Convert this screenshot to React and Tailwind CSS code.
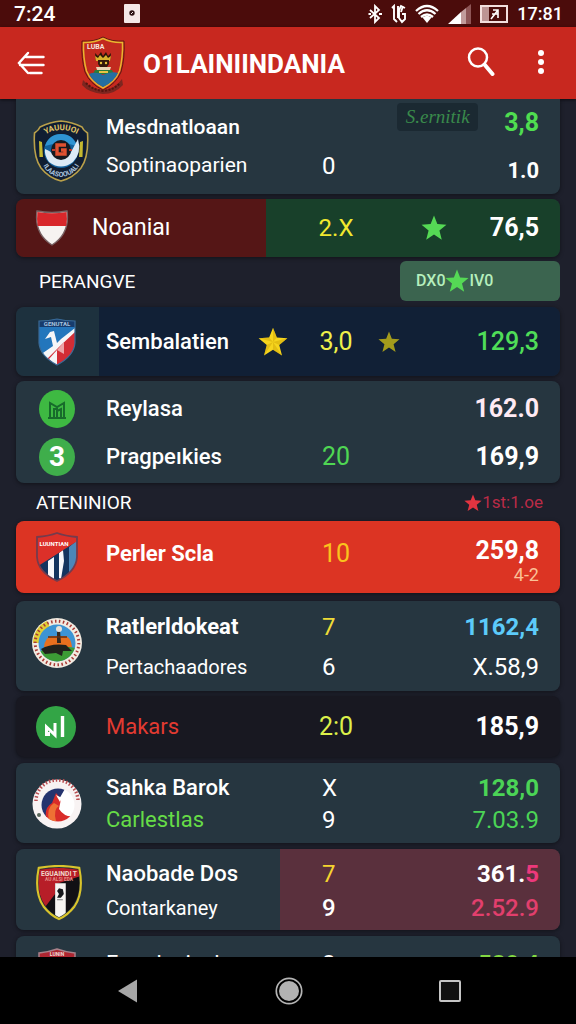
import React from "react";

function Star({ className, shaded }) {
  return (
    <svg viewBox="0 0 24 24" className={className} aria-hidden="true">
      <path
        d="M12 0.5 L15.1 8.4 L23.5 9 L17 14.4 L19.2 22.8 L12 18.1 L4.8 22.8 L7 14.4 L0.5 9 L8.9 8.4 Z"
        fill="currentColor"
      />
      {shaded && (
        <path
          d="M12 0.5 L12 12 L15.1 8.4 Z M23.5 9 L12 12 L17 14.4 Z M19.2 22.8 L12 12 L12 18.1 Z M4.8 22.8 L12 12 L7 14.4 Z M0.5 9 L12 12 L8.9 8.4 Z"
          fill="#c99a06"
          opacity="0.4"
        />
      )}
    </svg>
  );
}

function ClubCrest() {
  return (
    <svg viewBox="0 0 44 58" className="h-[58px] w-11 shrink-0" aria-hidden="true">
      <path d="M2 44 Q10 53 22 54 Q34 53 41 43 L42 49 Q34 58 22 58 Q8 57 1 49 Z" fill="#7d2620" />
      <path d="M5 47 Q12 54 22 55 Q33 54 39 47" fill="none" stroke="#55150f" strokeWidth="2" strokeDasharray="2 1.5" />
      <path d="M22 1 Q13 6 1 5 Q0 22 4 36 Q9 48 22 54 Q35 48 40 36 Q44 22 43 5 Q31 6 22 1 Z" fill="#c22a1f" stroke="#5e1a10" strokeWidth="1" />
      <path d="M22 2.5 Q13 7 2.5 6.5 Q2 22 5.5 35 Q10 46 22 52 Q34 46 38.5 35 Q42 22 41.5 6.5 Q31 7 22 2.5 Z" fill="none" stroke="#e9b62e" strokeWidth="1.5" />
      <text x="6" y="13" fontFamily="Roboto, sans-serif" fontWeight="700" fontSize="7" fill="#f7e4dc">LUBA</text>
      <path d="M14 17 l3 3 l3 -4 l2 4 l3 -4 l2 4 l3 -3 l-1 8 h-14 Z" fill="#2a1509" />
      <path d="M14 20 l3 2 l2 -3 l3 3 l3 -3 l2 3 l3 -2 l-1 5 h-14 Z" fill="#d9b12c" />
      <path d="M17 24 h11 v4 l-2 3 h-7 l-2 -3 Z" fill="#33190b" />
      <circle cx="20" cy="27" r="1.2" fill="#e8c43b" />
      <circle cx="25" cy="27" r="1.2" fill="#e8c43b" />
      <path d="M15 31 h15 l-1 3 h-13 Z" fill="#e9d6b4" />
      <path d="M14 34 h17 l2 4 h-21 Z" fill="#2d7b3b" />
      <path d="M8 38 Q15 35 22 39 Q30 35 37 37 Q33 46 22 51 Q12 46 8 38 Z" fill="#246fa0" />
      <path d="M18 35 h9 v2 h-9 Z" fill="#e7c445" />
    </svg>
  );
}

function PoliceCrest() {
  return (
    <svg viewBox="0 0 56 64" className="h-16 w-14" aria-hidden="true">
      <path d="M28 2 Q17 3 7 8 Q6 11 1.5 14 Q0 38 8 49 Q16 59 28 62 Q40 59 48 49 Q56 38 54.5 14 Q50 11 49 8 Q39 3 28 2 Z" fill="#101e32" stroke="#b9a04a" strokeWidth="1.6" />
      <path d="M9 23 L6 22 L6.500 38 L10 38 Z M47 23 L50 22 L49.5 38 L46 38 Z" fill="#c5b92f" />
      <path id="police-top" d="M8 18 Q28 4 49 18" fill="none" />
      <text fontFamily="Roboto, sans-serif" fontWeight="700" fontSize="8" fill="#e3c766">
        <textPath href="#police-top" startOffset="5">YAUUUOI</textPath>
      </text>
      <circle cx="28" cy="32" r="17" fill="#12629d" />
      <path d="M12 27 Q16 15 28 15 Q40 15 44 27 L36 25 H20 Z" fill="#2f94d2" />
      <path d="M12 30 Q18 32 20 36 Q28 44 37 35 L45 20 Q49 34 40 43 Q28 52 16 43 Q11 36 12 30 Z" fill="#dceaf5" />
      <circle cx="28" cy="31" r="10" fill="#17191f" />
      <path d="M33 26 H24 V35 H32 V31 H28" fill="none" stroke="#df5131" strokeWidth="3.4" />
      <path d="M22 31 h-3 M36 31 h3" stroke="#bc3c2c" strokeWidth="2" />
      <path id="police-bottom" d="M8 41 Q13 57 28 58 Q43 57 49 41" fill="none" />
      <text fontFamily="Roboto, sans-serif" fontWeight="700" fontSize="7" fill="#a9c2dc">
        <textPath href="#police-bottom" startOffset="6">ILAASOOUALI</textPath>
      </text>
    </svg>
  );
}

function FlagShield() {
  return (
    <svg viewBox="0 0 34 38" className="h-[38px] w-[34px]" aria-hidden="true">
      <path d="M2 2 Q17 5 32 2 Q35 25 17 36 Q-1 25 2 2 Z" fill="#f6f3f1" stroke="#796365" strokeWidth="1.4" />
      <path d="M2.500 3 Q17 5.500 31.500 3 Q32.500 10 31.200 17 H2.800 Q1.500 10 2.500 3 Z" fill="#d8272b" />
    </svg>
  );
}

function BlueRedShield() {
  return (
    <svg viewBox="0 0 40 50" className="h-[50px] w-10" aria-hidden="true">
      <defs>
        <clipPath id="blue-red"><path d="M2 4 Q12 4 20 2 Q28 4 38 4 V26 Q37 39 20 48 Q3 39 2 26 Z" /></clipPath>
      </defs>
      <g clipPath="url(#blue-red)">
        <path d="M0 0 H40 V50 H0 Z" fill="#2376bc" />
        <path d="M0 0 H40 V10 H0 Z" fill="#173c6d" />
        <path d="M38 12 L8 43 L20 50 L40 40 Z" fill="#d22d35" />
        <path d="M38 11 L24 22 L20 26 L17 14 L13 15 L8 22 L14 20 L16 29 L3 38 L8 44 L22 30 L38 15 Z" fill="#f5f5f7" />
        <path d="M12 42 L20 33 V50 Z" fill="#f5f5f7" />
        <path d="M20 33 L27 25 V37 Z" fill="#eca5a8" />
      </g>
      <path d="M2 4 Q12 4 20 2 Q28 4 38 4 V26 Q37 39 20 48 Q3 39 2 26 Z" fill="none" stroke="#3a6a96" strokeWidth="1.2" />
      <text x="20" y="9" textAnchor="middle" fontFamily="Roboto, sans-serif" fontWeight="700" fontSize="6" fill="#a9c3df">GENUTAL</text>
    </svg>
  );
}

function BookBadge() {
  return (
    <svg viewBox="0 0 36 38" className="h-[38px] w-9" aria-hidden="true">
      <ellipse cx="18" cy="19" rx="18" ry="19" fill="#3eb942" />
      <path d="M11 27 V13 L18 17 L25 13 V27 M9 28 H27 M15 27 V19 H18 V27 M18 21 L22 19 V27" fill="none" stroke="#176b2b" strokeWidth="2" />
    </svg>
  );
}

function StripedShield() {
  return (
    <svg viewBox="0 0 44 52" className="h-[52px] w-11" aria-hidden="true">
      <defs>
        <clipPath id="striped"><path d="M2 6 Q14 5 22 2 Q30 5 42 6 V26 Q41 41 22 50 Q3 41 2 26 Z" /></clipPath>
      </defs>
      <g clipPath="url(#striped)">
        <path d="M0 0 H44 V52 H0 Z" fill="#14345f" />
        <path d="M34 16 L44 8 V36 L34 44 Z" fill="#4c87b8" />
        <path d="M13 30 L19 26 V52 H13 Z M24 22 L28 19 L29 30 L26 48 L24 47 Z" fill="#f8f8fb" />
        <path d="M0 0 H44 V9 L0 37 Z" fill="#dc3029" />
      </g>
      <path d="M2 6 Q14 5 22 2 Q30 5 42 6 V26 Q41 41 22 50 Q3 41 2 26 Z" fill="none" stroke="#743b4d" strokeWidth="1.8" />
      <text x="19" y="15" textAnchor="middle" fontFamily="Roboto, sans-serif" fontWeight="700" fontSize="6" fill="#fff">LUUNTIAN</text>
    </svg>
  );
}

function LandscapeSeal() {
  return (
    <svg viewBox="0 0 52 52" className="h-[52px] w-[52px]" aria-hidden="true">
      <defs><clipPath id="land"><circle cx="26" cy="26" r="18.500" /></clipPath></defs>
      <circle cx="26" cy="26" r="25" fill="#f2ebe1" />
      <path d="M2 26 A24 24 0 0 1 16 4 L19 10 A18 18 0 0 0 8 26 Z" fill="#e1cf36" />
      <circle cx="26" cy="26" r="21.800" fill="none" stroke="#a93a35" strokeWidth="3" strokeDasharray="1.500 2.500" />
      <g clipPath="url(#land)">
        <path d="M0 0 H52 V52 H0 Z" fill="#3d94d4" />
        <path d="M13 30 Q14 20 21 19 H35 Q40 21 41 30 Z" fill="#e8701e" />
        <path d="M7 35 Q24 27 45 31 V52 H7 Z" fill="#3c9b35" />
        <path d="M10 32 Q20 26 35 28 L41 34 L32 34 L31 39 L25 36 L14 37 Z" fill="#20221d" />
        <path d="M26 26 L26 15 L29 13 L30 26 Z" fill="#34291f" />
        <circle cx="28" cy="12" r="3" fill="#e8e0d6" />
        <path d="M17 20 H36" stroke="#602f16" strokeWidth="1.500" />
      </g>
    </svg>
  );
}

function GreenMark() {
  return (
    <svg viewBox="0 0 40 42" className="h-[42px] w-10" aria-hidden="true">
      <ellipse cx="20" cy="21" rx="20" ry="21" fill="#33a546" />
      <path d="M10.500 30 V21 L19 29 V17" fill="none" stroke="#fff" strokeWidth="3" />
      <path d="M9 28 H14" stroke="#fff" strokeWidth="4" />
      <path d="M26.500 10 V31" stroke="#fff" strokeWidth="3.400" />
    </svg>
  );
}

function BirdSeal() {
  return (
    <svg viewBox="0 0 50 50" className="h-[50px] w-[50px]" aria-hidden="true">
      <defs><clipPath id="bird"><circle cx="26" cy="26" r="16.500" /></clipPath></defs>
      <circle cx="25" cy="25" r="24.500" fill="#f8f3f3" />
      <path d="M4 22 A21 21 0 0 1 46 22" fill="none" stroke="#b94f52" strokeWidth="3.500" strokeDasharray="1.500 2" />
      <g clipPath="url(#bird)">
        <path d="M0 0 H52 V52 H0 Z" fill="#fff" />
        <path d="M8 8 H34 L26 22 L17 38 H8 Z" fill="#25346e" />
        <path d="M16 45 Q10 30 20 24 L24 14 L29 20 L27 30 Q33 39 43 37 L36 46 Z" fill="#d92c29" />
        <path d="M17 42 Q14 29 22 24 L27 27 Q21 30 24 42 Z" fill="#ee7034" />
        <path d="M24 16 L30 19 L28 23 Z" fill="#fff" />
      </g>
      <circle cx="7" cy="36" r="2" fill="#57665a" />
    </svg>
  );
}

function TricolorShield() {
  return (
    <svg viewBox="0 0 48 58" className="h-14 w-12" aria-hidden="true">
      <defs>
        <clipPath id="tricolor"><path d="M4 5 Q24 1 44 5 Q48 28 39 41 Q33 50 24 54 Q15 50 9 41 Q0 28 4 5 Z" /></clipPath>
      </defs>
      <g clipPath="url(#tricolor)">
        <path d="M0 0 H48 V58 H0 Z" fill="#111014" />
        <path d="M0 0 H48 V11 L20 20 V30 L10 43 L0 34 Z" fill="#b71e28" />
        <path d="M20 19 H31 V58 H20 Z" fill="#f6f4f2" />
        <path d="M22 27 l2 -3 l4 1 l1 5 l-3 4 h-4 l2 -4 Z" fill="#15161a" />
        <path d="M22 36 h6" stroke="#77777a" />
      </g>
      <path d="M3 3 Q24 -1 45 3 Q50 28 40 43 Q33 52 24 56 Q15 52 8 43 Q-2 28 3 3 Z" fill="none" stroke="#d9c42b" strokeWidth="2.200" />
      <text x="24" y="11" textAnchor="middle" fontFamily="Roboto, sans-serif" fontWeight="700" fontSize="7" fill="#f0d9cc">EGUAINDI T</text>
      <text x="24" y="17" textAnchor="middle" fontFamily="Roboto, sans-serif" fontWeight="700" fontSize="5" fill="#e58c86">AU ALSI EDA</text>
    </svg>
  );
}

function RedShield() {
  return (
    <svg viewBox="0 0 40 48" className="h-12 w-10" aria-hidden="true">
      <path d="M2 5 Q12 4 20 1 Q28 4 38 5 V26 Q36 39 20 47 Q4 39 2 26 Z" fill="#ad2631" stroke="#a8818a" strokeWidth="1.500" />
      <text x="20" y="8" textAnchor="middle" fontFamily="Roboto, sans-serif" fontWeight="700" fontSize="5" fill="#f1dcdc">LUNIN</text>
    </svg>
  );
}

function Team({ icon, names, iconClass = "w-[82px]", className = "leading-10" }) {
  return (
    <div className="flex min-w-0 items-center gap-2">
      <div className={"flex shrink-0 flex-col items-center gap-[10px] " + iconClass}>{icon}</div>
      <div className={"min-w-0 whitespace-nowrap text-[22px] " + className}>{names}</div>
    </div>
  );
}

function Card({ className, children }) {
  return (
    <li className={"grid shrink-0 grid-cols-[minmax(0,302fr)_36px_minmax(0,185fr)] items-center overflow-hidden rounded-lg pr-[21px] shadow-[0_1px_4px_rgba(0,0,0,0.45)] " + className}>
      {children}
    </li>
  );
}

const digit = "pl-1 text-left";
const slate = "bg-[#263640]";

export default function App() {
  return (
    <div className="flex h-screen flex-col overflow-hidden bg-[#1e202c] font-['Roboto','Liberation_Sans',sans-serif] text-white">
      <div className="flex h-[27px] shrink-0 items-center justify-between bg-[#4b0c0b] pr-[13px] pl-[14px] leading-6 font-medium">
        <div className="flex items-center gap-[69px]">
          <span className="text-[21px]">7:24</span>
          <svg viewBox="0 0 16 19" className="h-[19px] w-4" aria-hidden="true">
            <rect width="16" height="19" rx="1" fill="#f4e8e7" />
            <circle cx="8" cy="9" r="2.700" fill="#2b1213" />
            <path d="M7 10 L9 8" stroke="#f4e8e7" />
          </svg>
        </div>
        <div className="flex items-center gap-[9px]">
          <svg viewBox="0 0 14 20" className="h-5 w-[14px]" fill="none" stroke="#fff" strokeWidth="1.800" aria-hidden="true">
            <path d="M2 6 L11 14 L7 18 V2 L11 6 L2 14 M0.500 10 H3 M11 10 H14" />
          </svg>
          <svg viewBox="0 0 15 20" className="h-5 w-[15px]" fill="none" stroke="#fff" strokeWidth="1.900" aria-hidden="true">
            <path d="M1 4 L3 2 V15 L6 18 M7 2 V14 M14 4 L10 2 L8 6 V14 L11 18 L14 15 V10 H11 M12 2 L10 8" />
          </svg>
          <svg viewBox="0 0 24 20" className="h-5 w-6" aria-hidden="true">
            <path d="M12 19 L7.500 13.500 Q12 10 16.500 13.500 Z" fill="#fff" />
            <path d="M1 7 Q12 -3 23 7 M3.500 10 Q12 2.500 20.500 10 M6 13 Q12 8 18 13" fill="none" stroke="#fff" strokeWidth="2.300" />
          </svg>
          <svg viewBox="0 0 23 20" className="h-5 w-[23px]" aria-hidden="true">
            <path d="M0 20 L13 8 V20 Z" fill="#fff" />
            <path d="M13 8 L18 4 V20 H13 Z" fill="#c29c9c" />
            <path d="M18 4 L23 0 V20 H18 Z" fill="#8e5556" />
          </svg>
          <svg viewBox="0 0 28 18" className="h-[18px] w-7" fill="none" aria-hidden="true">
            <rect x="1" y="1" width="26" height="16" stroke="#f3dfde" strokeWidth="2" />
            <path d="M2 2 H9 V16 H2 Z" fill="#bd9494" />
            <path d="M11 14 L18 5 M13 5 H18 V13 M12 9 H18" stroke="#fff" strokeWidth="1.600" />
          </svg>
          <span className="text-[18px]">17:81</span>
        </div>
      </div>

      <header className="flex h-[72px] shrink-0 items-center bg-[#c8281f] pr-[27px] pl-[17px] shadow-[0_1px_3px_rgba(0,0,0,0.6)]">
        <button type="button" aria-label="Back" className="shrink-0">
          <svg viewBox="0 0 28 24" className="h-6 w-7" fill="none" stroke="#fff" strokeWidth="2.400" strokeLinecap="round" aria-hidden="true">
            <path d="M11 2 L2 12 L11 22 M9 6 H26.500 M3 14 H26.500 M13 22 H24.500" />
          </svg>
        </button>
        <div className="ml-9 mt-1"><ClubCrest /></div>
        <h1 className="ml-[18px] flex-1 pt-[2px] text-[26px] font-bold whitespace-nowrap">O1LAINIINDANIA</h1>
        <button type="button" aria-label="Search" className="mr-[38px] shrink-0 pb-1">
          <svg viewBox="0 0 28 30" className="h-[30px] w-7" fill="none" stroke="#fff" aria-hidden="true">
            <circle cx="11" cy="11.500" r="9" strokeWidth="2.500" />
            <path d="M17.500 18.500 L25.500 28" strokeWidth="4" strokeLinecap="round" />
          </svg>
        </button>
        <button type="button" aria-label="More options" className="flex w-4 shrink-0 flex-col items-center gap-[3px] pb-[2px]">
          <span className="size-[6px] rounded-full bg-white" />
          <span className="size-[6px] rounded-full bg-white" />
          <span className="size-[6px] rounded-full bg-white" />
        </button>
      </header>

      <main className="min-h-0 flex-1 overflow-y-auto px-4 [scrollbar-width:none]">
        <ul>
          <Card className={"h-[95px] rounded-t-none pb-2 " + slate}>
            <Team icon={<PoliceCrest />} iconClass="w-[82px] pt-1 pl-2" className="pb-[6px] leading-[38px]" names={<><p className="text-[21px] font-medium">Mesdnatloaan</p><p className="text-[21px]">Soptinaoparien</p></>} />
            <div className={"pt-[34px] text-[24px] leading-[38px] " + digit}>0</div>
            <div className="pb-1 text-right text-[25px] leading-[48px] font-bold">
              <div className="flex items-start justify-end gap-[26px]">
                <span className="mt-1 w-[81px] rounded-sm bg-[#1b2932] text-center font-['Liberation_Serif',serif] text-[19px] leading-7 font-normal text-[#398a4b] italic">S.ernitik</span>
                <span className="text-[#4fdd50]">3,8</span>
              </div>
              <div className="text-[22px]">1.0</div>
            </div>
          </Card>

          <Card className="mt-[5px] h-[58px] bg-[linear-gradient(90deg,#551616_46%,#18402a_46%)]">
            <Team icon={<FlagShield />} iconClass="w-[68px] pl-1" names={<p className="text-[23px]">Noaniaı</p>} />
            <div className="text-center text-[24px] text-[#f1e82f]">2.X</div>
            <div className="flex items-center justify-between pl-[67px] text-[25px] font-bold">
              <Star className="size-[26px] text-[#55d955]" />
              <span>76,5</span>
            </div>
          </Card>
        </ul>

        <div className="flex h-[50px] items-center justify-between pl-[23px]">
          <h2 className="text-[19px]">PERANGVE</h2>
          <button type="button" className="mb-[2px] flex h-10 w-40 items-center rounded-md bg-[#3b644f] pl-4 text-[16px] font-medium text-[#b5efbd]">
            <span>DX0</span>
            <Star className="size-6 text-[#55d955]" />
            <span>IV0</span>
          </button>
        </div>

        <ul>
          <Card className="h-[69px] bg-[linear-gradient(90deg,#1d313e_83px,#112036_83px)]">
            <div className="flex items-center justify-between pr-[30px]">
              <Team icon={<BlueRedShield />} names={<p className="font-medium">Sembalatien</p>} />
              <Star shaded className="size-[30px] shrink-0 text-[#f6d51d]" />
            </div>
            <div className="text-center text-[25px] whitespace-nowrap text-[#eef04a]">3,0</div>
            <div className="flex items-center justify-between pl-6 text-[25px] font-medium">
              <Star className="size-[22px] text-[#a39b1c]" />
              <span className="text-[#4fdd58]">129,3</span>
            </div>
          </Card>

          <Card className={"mt-[5px] h-[102px] pt-[2px] " + slate}>
            <Team
              icon={<><BookBadge /><span className="flex h-[38px] w-9 items-center justify-center rounded-[50%] bg-[#3fae4b] text-[28px] font-bold">3</span></>}
              className="leading-[48px]"
              names={<><p className="font-medium">Reylasa</p><p className="font-medium">Pragpeıkies</p></>}
            />
            <div className="pt-12 text-center text-[25px] leading-[48px] text-[#4fd653]">20</div>
            <div className="text-right text-[25px] leading-[48px] font-bold">
              <p className="text-[#ffeaf4]">162.0</p>
              <p>169,9</p>
            </div>
          </Card>
        </ul>

        <div className="flex h-[38px] items-center justify-between pt-[2px] pr-[17px] pl-5">
          <h2 className="text-[19px]">ATENINIOR</h2>
          <p className="flex items-center text-[17px] text-[#ba2b47]">
            <Star className="size-[18px] text-[#e23440]" />
            <span>1st:1.oe</span>
          </p>
        </div>

        <ul>
          <Card className="h-[72px] bg-[#dc3423]">
            <Team icon={<StripedShield />} className="pb-[6px] leading-10" names={<p className="font-bold">Perler Scla</p>} />
            <div className="pb-[6px] text-center text-[25px] text-[#fac31d]">10</div>
            <div className="pt-2 text-right">
              <p className="text-[25px] leading-7 font-bold">259,8</p>
              <p className="text-[18px] leading-5 text-[#fbc197]">4&#8209;2</p>
            </div>
          </Card>

          <Card className={"mt-2 h-[90px] pt-[2px] " + slate}>
            <Team icon={<LandscapeSeal />} iconClass="w-[82px] pb-2" names={<><p className="font-bold">Ratlerldokeat</p><p className="text-[20px]">Pertachaadores</p></>} />
            <div className={"text-[24px] leading-10 " + digit}><p className="text-[#eedb37]">7</p><p>6</p></div>
            <div className="text-right text-[24px] leading-10"><p className="font-bold text-[#5ccbfa]">1162,4</p><p>X.58,9</p></div>
          </Card>

          <Card className="mt-[5px] h-[61px] bg-[#181821]">
            <Team icon={<GreenMark />} iconClass="w-[82px] pr-[2px]" names={<p className="text-[#e23b31]">Makars</p>} />
            <div className="text-center text-[25px] whitespace-nowrap text-[#dcf04a]">2:0</div>
            <div className="text-right text-[25px] font-bold">185,9</div>
          </Card>

          <Card className={"mt-[6px] h-20 pt-[2px] " + slate}>
            <Team icon={<BirdSeal />} className="leading-8" names={<><p className="font-medium">Sahka Barok</p><p className="text-[#66dc47]">Carlestlas</p></>} />
            <div className={"text-[24px] leading-8 " + digit}><p>X</p><p>9</p></div>
            <div className="text-right text-[24px] leading-8 text-[#4bd456]"><p className="font-bold">128,0</p><p>7.03.9</p></div>
          </Card>

          <Card className="mt-[6px] h-[81px] pt-[2px] bg-[linear-gradient(90deg,#263640_264px,#5a303d_264px)]">
            <Team icon={<TricolorShield />} iconClass="w-[82px] pt-1 pl-1" className="leading-[34px]" names={<><p className="font-medium">Naobade Dos</p><p className="text-[20px]">Contarkaney</p></>} />
            <div className={"text-[24px] leading-[34px] " + digit}><p className="text-[#f6d42f]">7</p><p className="font-medium">9</p></div>
            <div className="text-right text-[24px] leading-[34px]">
              <p className="font-bold">361.<span className="text-[#ec397c]">5</span></p>
              <p className="font-medium text-[#e23f6d]">2.52.9</p>
            </div>
          </Card>

          <Card className={"mt-[6px] h-[72px] " + slate}>
            <Team icon={<RedShield />} className="pb-4 leading-[34px]" names={<p>Farudenisal</p>} />
            <div className={"pb-4 text-[24px] leading-[34px] " + digit}>8</div>
            <div className="pb-4 text-right text-[24px] leading-[34px] font-bold text-[#83d943]">589,4</div>
          </Card>
        </ul>
      </main>

      <nav className="flex h-[67px] shrink-0 items-center justify-center gap-[135px] bg-black">
        <button type="button" aria-label="Back">
          <svg viewBox="0 0 26 26" className="size-[26px]" aria-hidden="true"><path d="M4 13 L23 1.500 V24.500 Z" fill="#a6a6a6" /></svg>
        </button>
        <button type="button" aria-label="Home">
          <svg viewBox="0 0 28 28" className="size-7" aria-hidden="true">
            <circle cx="14" cy="14" r="12.700" fill="none" stroke="#b5b5b5" strokeWidth="1.700" />
            <circle cx="14" cy="14" r="10" fill="#b3b3b3" />
          </svg>
        </button>
        <button type="button" aria-label="Recent apps">
          <svg viewBox="0 0 24 24" className="size-6" aria-hidden="true"><rect x="2" y="2" width="20" height="20" rx="1" fill="#111" stroke="#c5c5c5" strokeWidth="2" /></svg>
        </button>
      </nav>
    </div>
  );
}
